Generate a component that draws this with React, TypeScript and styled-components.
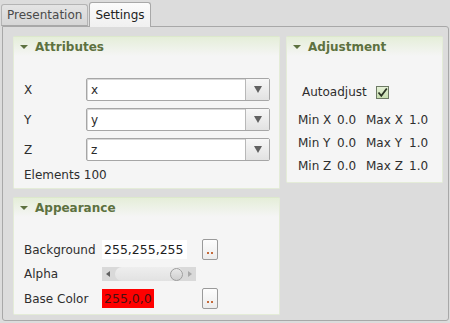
import React from 'react';
import styled, { createGlobalStyle } from 'styled-components';

const GlobalStyle = createGlobalStyle`
  html, body {
    margin: 0;
    padding: 0;
    background: #dcdcdc;
  }
  body {
    font-family: "DejaVu Sans", "Liberation Sans", sans-serif;
    font-size: 12px;
    color: #2e2e2e;
  }
`;

const Window = styled.div`
  width: 450px;
  height: 323px;
  background: #dcdcdc;
  display: flex;
  flex-direction: column;
  overflow: hidden;
`;

const TabBar = styled.div`
  display: flex;
  align-items: flex-end;
  height: 26px;
  padding-left: 1px;
  box-sizing: border-box;
`;

const Tab = styled.div<{ $active?: boolean }>`
  height: ${p => (p.$active ? '25px' : '22px')};
  padding: 0 5px;
  margin-right: 1px;
  display: flex;
  align-items: center;
  box-sizing: border-box;
  border: 1px solid ${p => (p.$active ? '#a8a8a8' : '#b4b4b4')};
  border-bottom: ${p => (p.$active ? 'none' : '1px solid #a8a8a8')};
  border-radius: 3px 3px 0 0;
  background: ${p => (p.$active ? 'linear-gradient(#fbfbfb, #f0f0f0)' : 'linear-gradient(#e4e4e4, #d6d6d6)')};
  color: ${p => (p.$active ? '#222' : '#4a4a4a')};
  font-size: 12px;
  margin-bottom: ${p => (p.$active ? '-1px' : '0')};
  position: relative;
  z-index: ${p => (p.$active ? 1 : 0)};
`;

const Pane = styled.div`
  flex: 1;
  margin: 0 1px 2px 2px;
  border: 1px solid #a8a8a8;
  border-radius: 0 3px 3px 3px;
  background: #dcdcdc;
  padding: 9px 5px 0 10px;
  display: grid;
  grid-template-columns: 267px 157px;
  grid-template-rows: 153px 118px;
  column-gap: 6px;
  row-gap: 8px;
  align-items: start;
  box-sizing: border-box;
`;

const Group = styled.div<{ $h: number }>`
  height: ${p => p.$h}px;
  background: #f5f5f5;
  border: 1px solid #e4ecd8;
  border-top-color: #dce8cc;
  border-radius: 2px;
  box-sizing: border-box;
  display: flex;
  flex-direction: column;
`;

const GroupHeader = styled.div`
  height: 19px;
  flex: none;
  display: flex;
  align-items: center;
  gap: 7px;
  padding-left: 6px;
  background: linear-gradient(#e5eed9, #f5f5f5);
  color: #5d7140;
  font-weight: bold;
  font-size: 12px;
`;

const Caret = styled.span`
  width: 0;
  height: 0;
  border-left: 4px solid transparent;
  border-right: 4px solid transparent;
  border-top: 4px solid #5d7140;
  margin-top: 1px;
`;

const FormGrid = styled.div`
  display: grid;
  grid-template-columns: 62px 184px;
  grid-auto-rows: 23px;
  row-gap: 7px;
  align-items: center;
  padding: 22px 0 0 10px;
`;

const Label = styled.span`
  color: #2e2e2e;
`;

const Combo = styled.div`
  height: 23px;
  box-sizing: border-box;
  border: 1px solid #a6a6a6;
  border-radius: 2px;
  background: #fff;
  display: flex;
  box-shadow: inset 1px 1px 0 #d8d8d8;
`;

const ComboText = styled.span`
  flex: 1;
  padding-left: 4px;
  display: flex;
  align-items: center;
  color: #2a2a2a;
`;

const ComboButton = styled.span`
  width: 23px;
  border-left: 1px solid #b8b8b8;
  background: linear-gradient(#f6f6f6, #e2e2e2);
  display: flex;
  align-items: center;
  justify-content: center;
`;

const DownArrow = styled.span`
  width: 0;
  height: 0;
  border-left: 4px solid transparent;
  border-right: 4px solid transparent;
  border-top: 7px solid #606060;
`;

const InfoLine = styled.div`
  padding: 7px 0 0 10px;
`;

const AutoRow = styled.div`
  display: flex;
  align-items: center;
  gap: 9px;
  padding: 29px 0 0 15px;
`;

const Check = styled.span`
  width: 13px;
  height: 13px;
  box-sizing: border-box;
  border: 1px solid #6d7a64;
  background: linear-gradient(#e4f0d6, #c8deb0);
  display: flex;
  align-items: center;
  justify-content: center;
`;

const RangeGrid = styled.div`
  display: grid;
  grid-template-columns: 39px 29px 43px auto;
  grid-auto-rows: 23px;
  align-items: center;
  padding: 9px 0 0 11px;
`;

const ColorGrid = styled.div`
  display: grid;
  grid-template-columns: 78px 100px 16px;
  grid-template-rows: 21px 24px 21px;
  row-gap: 2px;
  align-items: center;
  padding: 22px 0 0 10px;
`;

const ColorValue = styled.span<{ $bg: string; $fg: string; $w: number }>`
  width: ${p => p.$w}px;
  height: 19px;
  background: ${p => p.$bg};
  color: ${p => p.$fg};
  display: flex;
  align-items: center;
  padding-left: 2px;
  box-sizing: border-box;
  font-size: 12.5px;
`;

const DotsButton = styled.span`
  width: 16px;
  height: 21px;
  box-sizing: border-box;
  border: 1px solid #9a9a9a;
  border-radius: 2px;
  background: linear-gradient(#fdfdfd, #ececec);
  display: flex;
  align-items: flex-end;
  justify-content: center;
  padding-bottom: 5px;
  gap: 2px;
`;

const Dot = styled.span`
  width: 2px;
  height: 2px;
  background: #c56a3a;
`;

const Slider = styled.div`
  width: 94px;
  height: 14px;
  background: #d9d9d9;
  display: flex;
  align-items: center;
  gap: 3px;
  padding: 0 4px;
  box-sizing: border-box;
`;

const SliderArrow = styled.span<{ $dir: 'left' | 'right' }>`
  width: 0;
  height: 0;
  border-top: 3px solid transparent;
  border-bottom: 3px solid transparent;
  ${p => (p.$dir === 'left' ? 'border-right: 4px solid #606060;' : 'border-left: 4px solid #a8a8a8;')}
`;

const Groove = styled.span`
  flex: 1;
  height: 14px;
  border-radius: 7px;
  background: linear-gradient(#eeeeee, #e2e2e2);
  display: flex;
  justify-content: flex-end;
  align-items: center;
  margin: 0 2px;
`;

const Handle = styled.span`
  width: 13px;
  height: 13px;
  border-radius: 50%;
  border: 1px solid #9c9c9c;
  background: linear-gradient(#e8e8e8, #cfcfcf);
  box-sizing: border-box;
`;

const ranges = [
  { axis: 'X', min: '0.0', max: '1.0' },
  { axis: 'Y', min: '0.0', max: '1.0' },
  { axis: 'Z', min: '0.0', max: '1.0' },
];

const ComboBox: React.FC<{ value: string }> = ({ value }) => (
  <Combo>
    <ComboText>{value}</ComboText>
    <ComboButton>
      <DownArrow />
    </ComboButton>
  </Combo>
);

const Dots: React.FC = () => (
  <DotsButton>
    <Dot />
    <Dot />
  </DotsButton>
);

const App: React.FC = () => {
  return (
    <Window>
      <GlobalStyle />
      <TabBar>
        <Tab>Presentation</Tab>
        <Tab $active>Settings</Tab>
      </TabBar>
      <Pane>
        <Group $h={153}>
          <GroupHeader>
            <Caret />
            Attributes
          </GroupHeader>
          <FormGrid>
            <Label>X</Label>
            <ComboBox value="x" />
            <Label>Y</Label>
            <ComboBox value="y" />
            <Label>Z</Label>
            <ComboBox value="z" />
          </FormGrid>
          <InfoLine>Elements 100</InfoLine>
        </Group>

        <Group $h={147}>
          <GroupHeader>
            <Caret />
            Adjustment
          </GroupHeader>
          <AutoRow>
            <Label>Autoadjust</Label>
            <Check>
              <svg width="11" height="11" viewBox="0 0 11 11">
                <path d="M1.5 5.5 L4.3 8.8 L9.8 1.5" fill="none" stroke="#2b3524" strokeWidth="1.8" />
              </svg>
            </Check>
          </AutoRow>
          <RangeGrid>
            {ranges.map(r => (
              <React.Fragment key={r.axis}>
                <Label>Min {r.axis}</Label>
                <Label>{r.min}</Label>
                <Label>Max {r.axis}</Label>
                <Label>{r.max}</Label>
              </React.Fragment>
            ))}
          </RangeGrid>
        </Group>

        <Group $h={118}>
          <GroupHeader>
            <Caret />
            Appearance
          </GroupHeader>
          <ColorGrid>
            <Label>Background</Label>
            <ColorValue $bg="#ffffff" $fg="#1e1e1e" $w={85}>255,255,255</ColorValue>
            <Dots />
            <Label>Alpha</Label>
            <Slider>
              <SliderArrow $dir="left" />
              <Groove>
                <Handle />
              </Groove>
              <SliderArrow $dir="right" />
            </Slider>
            <span />
            <Label>Base Color</Label>
            <ColorValue $bg="#ff0000" $fg="#4a1010" $w={52}>255,0,0</ColorValue>
            <Dots />
          </ColorGrid>
        </Group>
      </Pane>
    </Window>
  );
};

export default App;
